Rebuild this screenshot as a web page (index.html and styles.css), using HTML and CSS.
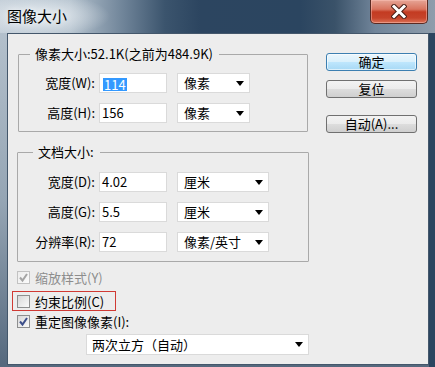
FILE: index.html
```html
<!DOCTYPE html>
<html>
<head>
    <title>图像大小</title>
    <link rel="stylesheet" href="styles.css">
</head>
<body>
    <div class="window">
        <div class="titlebar">
            <span class="title">图像大小</span>
            <button class="close-button">
                <svg width="16" height="15" viewBox="0 0 16 15">
                    <path d="M3 2.5 L13 12.5 M13 2.5 L3 12.5" stroke="#4a1e16" stroke-width="5" stroke-linecap="square"/>
                    <path d="M3 2.5 L13 12.5 M13 2.5 L3 12.5" stroke="#ffffff" stroke-width="3" stroke-linecap="square"/>
                </svg>
            </button>
        </div>

        <div class="client">
            <div class="left-col">
                <fieldset class="group group-pixels">
                    <legend>像素大小:52.1K(之前为484.9K)</legend>
                    <div class="field-row">
                        <span class="field-label">宽度(W):</span>
                        <div class="text-input"><span class="selected">114</span></div>
                        <div class="select"><span>像素</span><span class="arrow"></span></div>
                    </div>
                    <div class="field-row">
                        <span class="field-label">高度(H):</span>
                        <div class="text-input">156</div>
                        <div class="select"><span>像素</span><span class="arrow"></span></div>
                    </div>
                </fieldset>

                <fieldset class="group group-doc">
                    <legend>文档大小:</legend>
                    <div class="field-row">
                        <span class="field-label">宽度(D):</span>
                        <div class="text-input">4.02</div>
                        <div class="select"><span>厘米</span><span class="arrow"></span></div>
                    </div>
                    <div class="field-row">
                        <span class="field-label">高度(G):</span>
                        <div class="text-input">5.5</div>
                        <div class="select"><span>厘米</span><span class="arrow"></span></div>
                    </div>
                    <div class="field-row">
                        <span class="field-label">分辨率(R):</span>
                        <div class="text-input">72</div>
                        <div class="select"><span>像素/英寸</span><span class="arrow"></span></div>
                    </div>
                </fieldset>

                <div class="checks">
                    <div class="check-row disabled">
                        <span class="check-box">
                            <svg width="11" height="11" viewBox="0 0 11 11"><path d="M2 5.5 L4.5 8.5 L9 2" fill="none" stroke="#a4a4a4" stroke-width="2"/></svg>
                        </span>
                        缩放样式(Y)
                    </div>
                    <div class="check-row marked">
                        <span class="check-box"></span>
                        约束比例(C)
                    </div>
                    <div class="check-row last">
                        <span class="check-box">
                            <svg width="11" height="11" viewBox="0 0 11 11"><path d="M2 5.5 L4.5 8.5 L9 2" fill="none" stroke="#3d4f8a" stroke-width="2"/></svg>
                        </span>
                        重定图像像素(I):
                    </div>
                </div>

                <div class="select select-wide"><span>两次立方（自动）</span><span class="arrow"></span></div>
            </div>

            <div class="right-col">
                <button class="btn btn-default">确定</button>
                <button class="btn">复位</button>
                <button class="btn btn-auto">自动(A)...</button>
            </div>
        </div>
    </div>
</body>
</html>
```

FILE: styles.css
```css
body {
    margin: 0;
    width: 435px;
    height: 367px;
    overflow: hidden;
    font-family: "Noto Sans CJK SC", "Noto Sans", sans-serif;
    font-size: 13px;
    color: #000;
}

.window {
    width: 435px;
    height: 367px;
    display: flex;
    flex-direction: column;
    background:
        linear-gradient(90deg, transparent 429px, #2b4560 429px),
        linear-gradient(180deg, #b9c5d0 0%, #95a5b4 55%, #55687d 100%);
}

.titlebar {
    flex: none;
    height: 33px;
    display: flex;
    align-items: flex-start;
    background:
        radial-gradient(ellipse 70px 22px at 40px 16px, rgba(235, 240, 244, 0.95), rgba(235, 240, 244, 0) 100%),
        linear-gradient(90deg, #c3ced8 0px, #b3c1cd 70px, #6d8297 125px, #3b546d 165px, #2c4560 200px, #2b4560 300px, #3a5269 335px, #71859a 375px, #8e9dac 435px);
}

.title {
    margin: 6px 0 0 7px;
    font-size: 15px;
    line-height: 20px;
    text-shadow: 0 0 6px rgba(255, 255, 255, 0.9);
}

.close-button {
    margin-left: auto;
    margin-right: 7px;
    width: 58px;
    height: 24px;
    padding: 0;
    border: 1px solid #5a2a22;
    border-top: none;
    border-radius: 0 0 5px 5px;
    background: linear-gradient(#e6a596 0%, #d9745f 40%, #c33b22 52%, #c6432a 78%, #dc7256 100%);
    box-shadow: inset 0 0 0 1px rgba(255, 200, 190, 0.45);
    display: flex;
    align-items: center;
    justify-content: center;
}

.client {
    flex: none;
    height: 332px;
    margin: 0 6px 2px 7px;
    box-sizing: border-box;
    border: 1px solid #44576b;
    background: #ededed;
    display: flex;
    padding: 12px 0 0 9px;
}

.left-col {
    width: 292px;
    display: flex;
    flex-direction: column;
}

.group {
    margin: 0;
    border: 1px solid #a9a9a9;
    border-radius: 1px;
    min-width: 0;
}

.group legend {
    font-size: 13px;
    line-height: 16px;
    padding: 0 6px 0 5px;
}

.group-pixels {
    margin: 0 1px;
    padding: 11px 0 8px;
}

.group-pixels legend {
    margin-left: 11px;
}

.group-doc {
    margin-top: 12px;
    padding: 12px 0 9px;
}

.group-doc legend {
    margin-left: 15px;
}

.field-row {
    display: flex;
    align-items: center;
    height: 20px;
}

.field-row + .field-row {
    margin-top: 10px;
}

.field-label {
    width: 76px;
    margin-right: 4px;
    text-align: right;
    line-height: 20px;
}

.group-doc .field-label {
    width: 77px;
}

.text-input {
    width: 68px;
    height: 20px;
    box-sizing: border-box;
    margin-right: 10px;
    padding-left: 2px;
    border: 1px solid #dadada;
    background: #fff;
    line-height: 18px;
}

.selected {
    display: inline-block;
    height: 13px;
    line-height: 13px;
    margin-left: 1px;
    padding: 0 1px;
    background: #3399ff;
    color: #fff;
    vertical-align: middle;
}

.select {
    height: 20px;
    box-sizing: border-box;
    display: flex;
    align-items: center;
    justify-content: space-between;
    padding: 0 5px 0 6px;
    border: 1px solid #dadada;
    background: #fff;
    line-height: 18px;
}

.group-pixels .select {
    width: 73px;
}

.group-doc .select {
    width: 92px;
}

.arrow {
    width: 0;
    height: 0;
    border-left: 4px solid transparent;
    border-right: 4px solid transparent;
    border-top: 5px solid #000;
}

.checks {
    margin-top: 4px;
}

.check-row {
    display: flex;
    align-items: center;
    height: 22px;
}

.check-row.marked {
    width: 104px;
    height: 20px;
    box-sizing: border-box;
    margin: 3px 0 0 -5px;
    padding-left: 4px;
    border: 1px solid #d03a34;
}

.check-row.last {
    height: 21px;
}

.check-row.disabled {
    color: #8d8d8d;
}

.check-box {
    flex: none;
    width: 13px;
    height: 13px;
    box-sizing: border-box;
    margin-right: 5px;
    border: 1px solid #8e8f8f;
    background: linear-gradient(135deg, #d8d8d8, #fafafa);
    display: flex;
    align-items: center;
    justify-content: center;
}

.disabled .check-box {
    border-color: #c2c2c2;
    background: linear-gradient(135deg, #ececec, #fbfbfb);
}

.select-wide {
    width: 223px;
    height: 21px;
    margin: 2px 0 0 69px;
    padding-left: 5px;
}

.right-col {
    margin-left: 17px;
    padding-top: 7px;
    display: flex;
    flex-direction: column;
}

.btn {
    width: 91px;
    height: 18px;
    box-sizing: border-box;
    padding: 0;
    border: 1px solid #707070;
    border-radius: 3px;
    background: linear-gradient(#f3f3f3 0%, #ebebeb 50%, #dddddd 51%, #cfcfcf 100%);
    font: inherit;
    line-height: 16px;
    color: #000;
}

.btn-default {
    border-color: #3c7fb1;
    background: linear-gradient(#eaf6fd 0%, #d9f0fc 50%, #bee6fd 51%, #a7d9f5 100%);
    box-shadow: inset 0 0 0 1px rgba(255, 255, 255, 0.6);
}

.btn + .btn {
    margin-top: 9px;
}

.btn.btn-auto {
    margin-top: 17px;
}
```
